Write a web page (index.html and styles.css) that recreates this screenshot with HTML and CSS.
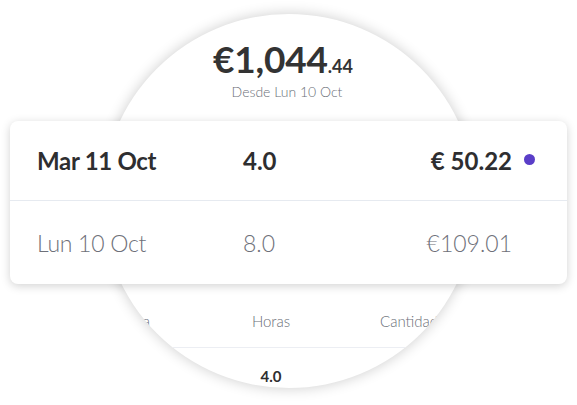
FILE: index.html
```html
<!DOCTYPE html>
<html lang="es">
<head>
  <meta charset="UTF-8">
  <meta name="viewport" content="width=device-width, initial-scale=1.0">
  <title>Resumen de pagos</title>
  <link rel="stylesheet" href="styles.css">
</head>
<body>
  <div class="stage">
    <!-- Magnified phone view -->
    <div class="lens">
      <div class="total">
        <div class="total-amount">€1,044<span class="cents">.44</span></div>
        <div class="total-since">Desde Lun 10 Oct</div>
      </div>
      <div class="lens-table">
        <div class="lens-row lens-head">
          <span class="c-date">Fecha</span>
          <span class="c-hours">Horas</span>
          <span class="c-amount">Cantidad</span>
        </div>
        <div class="lens-row lens-body">
          <span class="c-date">Mar 11 Oct</span>
          <span class="c-hours">4.0</span>
          <span class="c-amount">€ 50.22</span>
        </div>
      </div>
    </div>

    <!-- Highlighted card -->
    <div class="card">
      <div class="row row-active">
        <span class="date">Mar 11 Oct</span>
        <span class="hours">4.0</span>
        <span class="amount">€ 50.22</span>
        <span class="dot"></span>
      </div>
      <div class="row">
        <span class="date">Lun 10 Oct</span>
        <span class="hours">8.0</span>
        <span class="amount">€109.01</span>
        <span></span>
      </div>
    </div>
  </div>
</body>
</html>
```

FILE: styles.css
```css
/* Reset */
* {
  margin: 0;
  padding: 0;
  box-sizing: border-box;
}
body {
  font-family: Lato, "Open Sans", sans-serif;
  background: #fff;
  color: #2e2e30;
  overflow: hidden;
}

/* Stage: circle and card share one grid cell */
.stage {
  display: grid;
  width: 577px;
  height: 405px;
}
.stage > * {
  grid-area: 1 / 1;
}

/* Circle */
.lens {
  justify-self: start;
  align-self: start;
  width: 374px;
  height: 374px;
  margin: 14px 0 0 102px;
  border-radius: 50%;
  background: #fff;
  box-shadow: 0 0 14px rgba(0, 0, 0, 0.2);
  overflow: hidden;
}
.total {
  text-align: center;
  padding-top: 25px;
}
.total-amount {
  font-size: 37px;
  font-weight: 700;
  line-height: 40px;
  color: #333;
  letter-spacing: -0.2px;
  padding-right: 12px;
}
.cents {
  font-size: 18px;
  letter-spacing: 0;
}
.total-since {
  font-size: 14px;
  font-weight: 300;
  color: #6b6f78;
  line-height: 16px;
  margin-top: -2px;
  padding-right: 4px;
}

.lens-table {
  margin-top: 207px;
}
.lens-row {
  display: grid;
  grid-template-columns: 84px 168px 1fr;
  align-items: center;
}
.lens-head {
  height: 41px;
  font-size: 15px;
  font-weight: 300;
  color: #6b6f78;
  border-bottom: 1px solid #eceef3;
  padding-bottom: 12px;
}
.lens-body {
  height: 46px;
  font-size: 15px;
  font-weight: 700;
  color: #2e2e30;
  padding-top: 10px;
}
.c-date {
  text-align: right;
  padding-right: 36px;
}
.lens-body .c-date,
.lens-body .c-amount {
  visibility: hidden;
}
.c-hours {
  text-align: center;
  padding-left: 2px;
}
.c-amount {
  padding-left: 26px;
  white-space: nowrap;
}

/* Card */
.card {
  align-self: start;
  justify-self: start;
  width: 557px;
  margin: 121px 0 0 10px;
  background: #fff;
  border-radius: 8px;
  box-shadow: 0 2px 10px rgba(0, 0, 0, 0.18);
}
.row {
  display: grid;
  grid-template-columns: 206px 1fr auto 11px;
  column-gap: 12px;
  align-items: center;
  height: 83px;
  padding: 0 32px 0 27px;
  font-size: 23px;
  font-weight: 300;
  color: #6e7079;
}
.row-active {
  height: 80px;
  font-size: 24px;
  font-weight: 700;
  color: #2e2e30;
  border-bottom: 1px solid #e6eaf0;
}
.row .date {
  letter-spacing: -0.3px;
}
.row .hours {
  margin-left: -12px;
}
.row .amount {
  text-align: right;
}
.dot {
  width: 11px;
  height: 11px;
  border-radius: 50%;
  background: #5a3ec8;
  margin-top: -2px;
}
```
